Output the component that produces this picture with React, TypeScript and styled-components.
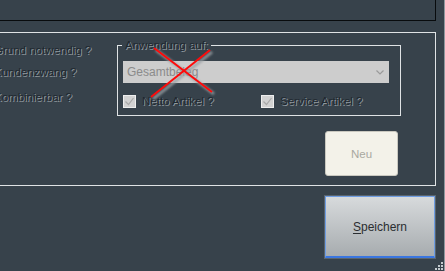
import React from "react";
import styled, { createGlobalStyle } from "styled-components";

const Global = createGlobalStyle`
  html, body { margin: 0; padding: 0; background: #37424b; overflow: hidden; }
  * { box-sizing: border-box; }
`;

const Window = styled.div`
  position: relative;
  width: 445px;
  height: 271px;
  background: #37424b;
  border-right: 1px solid #8e979d;
  overflow: hidden;
  font-family: "Liberation Sans", Arial, sans-serif;
  font-size: 11.5px;
  display: flex;
  flex-direction: column;
`;

const TopBox = styled.div`
  width: 436px;
  height: 21px;
  border-right: 1px solid #080b0d;
  border-bottom: 1px solid #080b0d;
`;

const Panel = styled.div`
  margin-top: 11px;
  margin-left: -2px;
  width: 438px;
  height: 154px;
  border: 1px solid #dfe3e5;
  display: flex;
  flex-direction: column;
`;

const TopRow = styled.div`
  display: flex;
`;

const Labels = styled.div`
  margin-left: -5px;
  width: 123px;
  display: flex;
  flex-direction: column;
`;

const Etched = styled.span`
  color: #1f282f;
  text-shadow: 1px 1px 0 #8f989e;
  white-space: nowrap;
  line-height: 14px;
`;

const Label = styled(Etched)<{ $top: number }>`
  display: block;
  margin-top: ${(p) => p.$top}px;
`;

const GroupBox = styled.div`
  position: relative;
  margin-top: 12px;
  width: 284px;
  height: 71px;
  border: 1px solid #dfe3e5;
  padding: 15px 0 0 5px;
`;

const Legend = styled(Etched)`
  position: absolute;
  top: -8px;
  left: 4px;
  padding: 0 3px;
  background: #37424b;
`;

const Select = styled.div`
  width: 266px;
  height: 22px;
  background: #cdcdcd;
  color: #8b8b8b;
  display: flex;
  align-items: center;
  justify-content: space-between;
  padding: 0 5px 0 4px;
  font-size: 12px;
`;

const CheckRow = styled.div`
  margin-top: 11px;
  display: grid;
  grid-template-columns: 138px auto;
`;

const CheckItem = styled.label`
  display: flex;
  align-items: center;
  gap: 6px;
`;

const Box = styled.span`
  width: 13px;
  height: 13px;
  border: 1px solid #eeeeee;
  background: #d2d2d2;
  display: flex;
  align-items: center;
  justify-content: center;
`;

const Cross = styled.svg`
  position: absolute;
  left: 0;
  top: 0;
  overflow: visible;
  pointer-events: none;
`;

const ButtonRow = styled.div`
  display: flex;
  justify-content: flex-end;
  padding-right: 37px;
  margin-top: 15px;
`;

const NeuButton = styled.button`
  width: 73px;
  height: 45px;
  background: #f3f2e9;
  border: 1px solid #c9c8bf;
  border-radius: 3px;
  color: #a9a9a1;
  font-family: inherit;
  font-size: 11.5px;
  padding: 0;
`;

const Footer = styled.div`
  width: 436px;
  display: flex;
  justify-content: flex-end;
  margin-top: 9px;
`;

const SaveFrame = styled.div`
  width: 112px;
  height: 64px;
  border: 1px solid #5a656e;
  display: flex;
`;

const SaveButton = styled.button`
  flex: 1;
  border: 1px solid #6f9de2;
  border-bottom: 2px solid #3a76e0;
  background: linear-gradient(#d7dadc, #a7acaf);
  color: #2b2e31;
  font-family: inherit;
  font-size: 12px;
  padding: 0;
  u { text-decoration: underline; text-underline-offset: 2px; }
`;

const Grip = styled.svg`
  position: absolute;
  right: 1px;
  bottom: 0;
`;

const Check = () => (
  <svg width="11" height="11" viewBox="0 0 11 11">
    <path d="M1.5 5.5 L4.5 8.5 L9.5 2" fill="none" stroke="#a9a9a9" strokeWidth="1.2" />
  </svg>
);

export default function App() {
  return (
    <>
      <Global />
      <Window>
        <TopBox />
        <Panel>
          <TopRow>
            <Labels>
              <Label $top={10}>Grund notwendig ?</Label>
              <Label $top={8}>Kundenzwang ?</Label>
              <Label $top={11}>Kombinierbar ?</Label>
            </Labels>
            <GroupBox>
              <Legend>Anwendung auf:</Legend>
              <Select>
                <span>Gesamtbeleg</span>
                <svg width="8" height="5" viewBox="0 0 8 5">
                  <path d="M0.5 0.5 L4 4 L7.5 0.5" fill="none" stroke="#9a9a9a" strokeWidth="1.2" />
                </svg>
              </Select>
              <CheckRow>
                <CheckItem>
                  <Box><Check /></Box>
                  <Etched>Netto Artikel ?</Etched>
                </CheckItem>
                <CheckItem>
                  <Box><Check /></Box>
                  <Etched>Service Artikel ?</Etched>
                </CheckItem>
              </CheckRow>
              <Cross width="120" height="60">
                <defs>
                  <filter id="blur" x="-20%" y="-20%" width="140%" height="140%">
                    <feGaussianBlur stdDeviation="1.2" />
                  </filter>
                </defs>
                <g stroke="#9aa0a4" strokeWidth="3" opacity="0.8" filter="url(#blur)">
                  <line x1="38" y1="4" x2="96" y2="48" />
                  <line x1="35" y1="53" x2="94" y2="6" />
                </g>
                <g stroke="#ff0a0a" strokeWidth="2">
                  <line x1="36" y1="2" x2="94" y2="46" />
                  <line x1="33" y1="51" x2="92" y2="4" />
                </g>
              </Cross>
            </GroupBox>
          </TopRow>
          <ButtonRow>
            <NeuButton>Neu</NeuButton>
          </ButtonRow>
        </Panel>
        <Footer>
          <SaveFrame>
            <SaveButton>
              <u>S</u>peichern
            </SaveButton>
          </SaveFrame>
        </Footer>
        <Grip width="8" height="9" viewBox="0 0 8 9">
          <g fill="#c3cace">
            <rect x="6" y="0" width="2" height="2" />
            <rect x="3" y="3" width="2" height="2" />
            <rect x="6" y="3" width="2" height="2" />
            <rect x="0" y="6" width="2" height="2" />
            <rect x="3" y="6" width="2" height="2" />
            <rect x="6" y="6" width="2" height="2" />
          </g>
        </Grip>
      </Window>
    </>
  );
}
